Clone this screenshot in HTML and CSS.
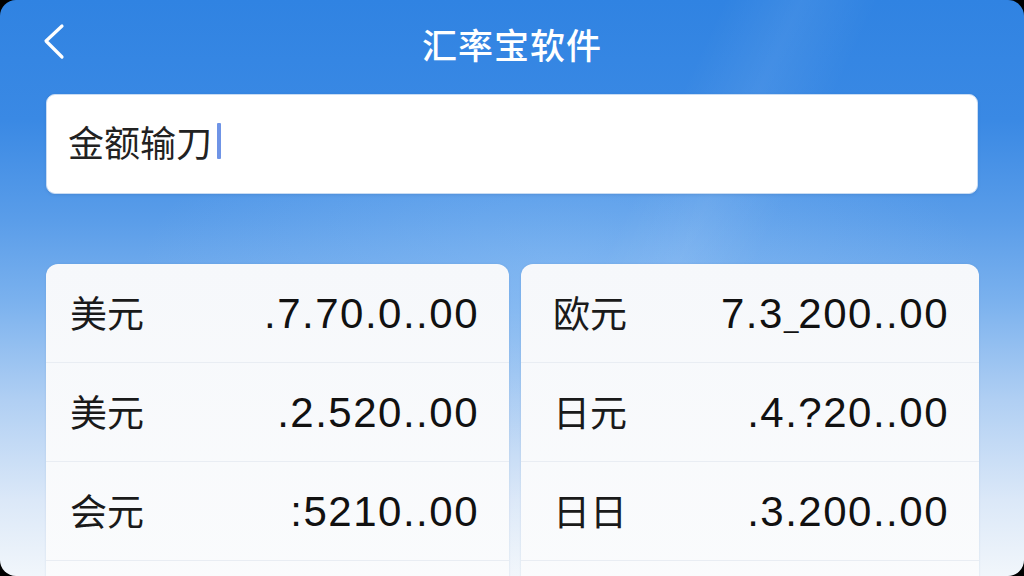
FILE: index.html
```html
<!DOCTYPE html>
<html lang="zh-CN">
<head>
    <meta charset="UTF-8">
    <meta name="viewport" content="width=device-width, initial-scale=1.0">
    <title>汇率宝软件</title>
    <link rel="stylesheet" href="styles.css">
</head>
<body>
    <div class="pantalla">
        <header class="cabecera">
            <a class="volver" href="#">
                <svg width="24" height="40" viewBox="0 0 24 40">
                    <path d="M20 3 L4 18 L20 34" fill="none" stroke="#fff" stroke-width="3.2" stroke-linecap="round" stroke-linejoin="round"/>
                </svg>
            </a>
            <h1>汇率宝软件</h1>
            <span></span>
        </header>

        <div class="entrada">
            <span class="texto">金额输刀</span><span class="cursor"></span>
        </div>

        <div class="tarjetas">
            <div class="tarjeta">
                <div class="fila"><span class="moneda">美元</span><span class="valor">.7.70.0..00</span></div>
                <div class="fila"><span class="moneda">美元</span><span class="valor">.2.520..00</span></div>
                <div class="fila"><span class="moneda">会元</span><span class="valor">:5210..00</span></div>
                <div class="fila"></div>
            </div>
            <div class="tarjeta derecha">
                <div class="fila"><span class="moneda">欧元</span><span class="valor">7.3<span class="raya">_</span>200..00</span></div>
                <div class="fila"><span class="moneda">日元</span><span class="valor">.4.?20..00</span></div>
                <div class="fila"><span class="moneda">日日</span><span class="valor">.3.200..00</span></div>
                <div class="fila"></div>
            </div>
        </div>
    </div>
</body>
</html>
```

FILE: styles.css
```css
body {
    margin: 0;
    padding: 0;
    background-color: #000;
    font-family: "Noto Sans CJK SC", "Noto Sans", sans-serif;
    overflow: hidden;
}

.pantalla {
    width: 1024px;
    height: 576px;
    border-radius: 16px;
    overflow: hidden;
    background:
        linear-gradient(115deg, rgba(255,255,255,0) 56%, rgba(255,255,255,0.07) 62%, rgba(255,255,255,0) 68%),
        radial-gradient(ellipse 420px 180px at 560px 270px, rgba(150,198,248,0.4), rgba(150,198,248,0)),
        linear-gradient(180deg, #3083e2 0px, #3a89e4 120px, #5a9de9 220px, #7ab1ee 300px, #b0cff3 400px, #dbe8f8 500px, #f1f6fb 576px);
}

.cabecera {
    height: 94px;
    display: grid;
    grid-template-columns: 120px 1fr 120px;
    align-items: center;
}

.volver {
    padding-left: 42px;
    display: flex;
    align-items: center;
    margin-top: -8px;
}

.cabecera h1 {
    margin: 0;
    margin-top: -8px;
    text-align: center;
    color: #fff;
    font-size: 35px;
    font-weight: 500;
    letter-spacing: 1px;
}

.entrada {
    margin: 0 46px;
    height: 98px;
    background-color: #fff;
    border: 1px solid #c9dcf3;
    border-radius: 9px;
    display: flex;
    align-items: center;
    padding-left: 21px;
    box-shadow: 0 1px 3px rgba(20,60,120,0.15);
}

.texto {
    font-size: 36px;
    color: #222;
    margin-top: -7px;
}

.cursor {
    width: 4px;
    height: 36px;
    margin-left: 5px;
    margin-top: -6px;
    background-color: #6f94e6;
    border-radius: 1px;
}

.tarjetas {
    display: grid;
    grid-template-columns: 463px 458px;
    gap: 12px;
    margin: 70px 46px 0;
}

.tarjeta {
    background: linear-gradient(180deg, #f6f8fb, #fbfcfd);
    border-radius: 12px 12px 0 0;
    box-shadow: 0 0 2px rgba(40,80,140,0.15);
}

.fila {
    height: 98px;
    display: flex;
    align-items: center;
    justify-content: space-between;
    padding: 0 30px 0 24px;
    border-bottom: 1px solid #e9edf3;
}

.derecha .fila {
    padding-left: 32px;
}

.moneda {
    font-size: 37px;
    color: #1a1a1a;
    margin-top: -2px;
}

.valor {
    font-family: "Liberation Sans", Arial, sans-serif;
    font-size: 42px;
    color: #111;
    letter-spacing: 1.5px;
    margin-top: 2px;
}

.raya {
    letter-spacing: -6px;
    margin-right: 6px;
    font-size: 26px;
}
```
